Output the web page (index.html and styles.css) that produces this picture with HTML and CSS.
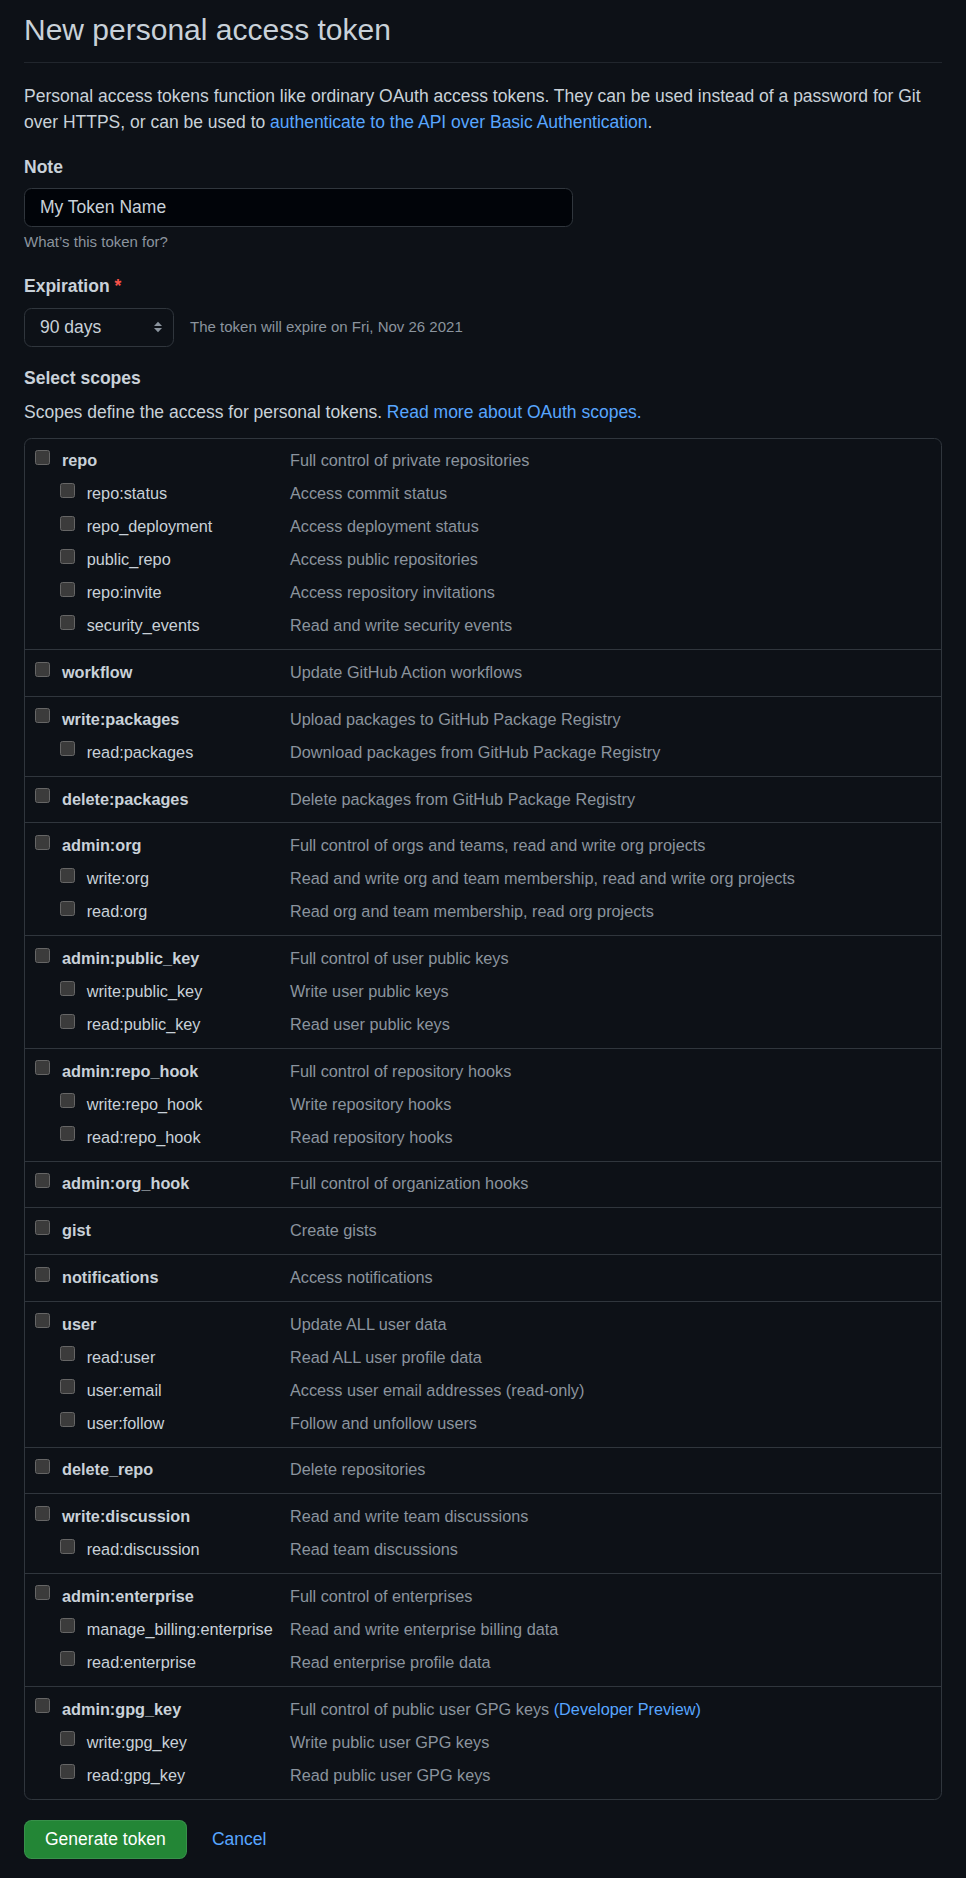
FILE: index.html
```html
<!DOCTYPE html>
<html lang="en">
<head>
<meta charset="utf-8">
<title>New personal access token</title>
<link rel="stylesheet" href="styles.css">
</head>
<body>
<main class="page">
  <div class="subhead">
    <h2 class="subhead-title">New personal access token</h2>
  </div>
  <p class="intro">Personal access tokens function like ordinary OAuth access tokens. They can be used instead of a password for Git over HTTPS, or can be used to <a href="#">authenticate to the API over Basic Authentication</a>.</p>

  <div class="field">
    <label class="field-label">Note</label>
    <input class="text-input" type="text" value="My Token Name">
    <p class="hint">What’s this token for?</p>
  </div>

  <div class="field expiration">
    <label class="field-label">Expiration <span class="req">*</span></label>
    <div class="expire-row">
      <div class="select">
        <span>90 days</span>
        <svg class="select-arrows" width="10" height="12" viewBox="0 0 10 12" aria-hidden="true">
          <path d="M1 5 L5 0.8 L9 5 Z" fill="#8b949e"/>
          <path d="M1 7 L5 11.2 L9 7 Z" fill="#8b949e"/>
        </svg>
      </div>
      <span class="expire-text">The token will expire on Fri, Nov 26 2021</span>
    </div>
  </div>

  <div class="field scopes-field">
    <h3 class="field-label">Select scopes</h3>
    <p class="scopes-intro">Scopes define the access for personal tokens. <a href="#">Read more about OAuth scopes.</a></p>

    <div class="scopes">
      <div class="scope-group">
        <div class="scope-row"><label class="scope-name"><input class="check" type="checkbox"><span class="scope-title">repo</span></label><span class="scope-desc">Full control of private repositories</span></div>
        <div class="scope-row sub"><label class="scope-name"><input class="check" type="checkbox"><span>repo:status</span></label><span class="scope-desc">Access commit status</span></div>
        <div class="scope-row sub"><label class="scope-name"><input class="check" type="checkbox"><span>repo_deployment</span></label><span class="scope-desc">Access deployment status</span></div>
        <div class="scope-row sub"><label class="scope-name"><input class="check" type="checkbox"><span>public_repo</span></label><span class="scope-desc">Access public repositories</span></div>
        <div class="scope-row sub"><label class="scope-name"><input class="check" type="checkbox"><span>repo:invite</span></label><span class="scope-desc">Access repository invitations</span></div>
        <div class="scope-row sub"><label class="scope-name"><input class="check" type="checkbox"><span>security_events</span></label><span class="scope-desc">Read and write security events</span></div>
      </div>
      <div class="scope-group">
        <div class="scope-row"><label class="scope-name"><input class="check" type="checkbox"><span class="scope-title">workflow</span></label><span class="scope-desc">Update GitHub Action workflows</span></div>
      </div>
      <div class="scope-group">
        <div class="scope-row"><label class="scope-name"><input class="check" type="checkbox"><span class="scope-title">write:packages</span></label><span class="scope-desc">Upload packages to GitHub Package Registry</span></div>
        <div class="scope-row sub"><label class="scope-name"><input class="check" type="checkbox"><span>read:packages</span></label><span class="scope-desc">Download packages from GitHub Package Registry</span></div>
      </div>
      <div class="scope-group">
        <div class="scope-row"><label class="scope-name"><input class="check" type="checkbox"><span class="scope-title">delete:packages</span></label><span class="scope-desc">Delete packages from GitHub Package Registry</span></div>
      </div>
      <div class="scope-group">
        <div class="scope-row"><label class="scope-name"><input class="check" type="checkbox"><span class="scope-title">admin:org</span></label><span class="scope-desc">Full control of orgs and teams, read and write org projects</span></div>
        <div class="scope-row sub"><label class="scope-name"><input class="check" type="checkbox"><span>write:org</span></label><span class="scope-desc">Read and write org and team membership, read and write org projects</span></div>
        <div class="scope-row sub"><label class="scope-name"><input class="check" type="checkbox"><span>read:org</span></label><span class="scope-desc">Read org and team membership, read org projects</span></div>
      </div>
      <div class="scope-group">
        <div class="scope-row"><label class="scope-name"><input class="check" type="checkbox"><span class="scope-title">admin:public_key</span></label><span class="scope-desc">Full control of user public keys</span></div>
        <div class="scope-row sub"><label class="scope-name"><input class="check" type="checkbox"><span>write:public_key</span></label><span class="scope-desc">Write user public keys</span></div>
        <div class="scope-row sub"><label class="scope-name"><input class="check" type="checkbox"><span>read:public_key</span></label><span class="scope-desc">Read user public keys</span></div>
      </div>
      <div class="scope-group">
        <div class="scope-row"><label class="scope-name"><input class="check" type="checkbox"><span class="scope-title">admin:repo_hook</span></label><span class="scope-desc">Full control of repository hooks</span></div>
        <div class="scope-row sub"><label class="scope-name"><input class="check" type="checkbox"><span>write:repo_hook</span></label><span class="scope-desc">Write repository hooks</span></div>
        <div class="scope-row sub"><label class="scope-name"><input class="check" type="checkbox"><span>read:repo_hook</span></label><span class="scope-desc">Read repository hooks</span></div>
      </div>
      <div class="scope-group">
        <div class="scope-row"><label class="scope-name"><input class="check" type="checkbox"><span class="scope-title">admin:org_hook</span></label><span class="scope-desc">Full control of organization hooks</span></div>
      </div>
      <div class="scope-group">
        <div class="scope-row"><label class="scope-name"><input class="check" type="checkbox"><span class="scope-title">gist</span></label><span class="scope-desc">Create gists</span></div>
      </div>
      <div class="scope-group">
        <div class="scope-row"><label class="scope-name"><input class="check" type="checkbox"><span class="scope-title">notifications</span></label><span class="scope-desc">Access notifications</span></div>
      </div>
      <div class="scope-group">
        <div class="scope-row"><label class="scope-name"><input class="check" type="checkbox"><span class="scope-title">user</span></label><span class="scope-desc">Update ALL user data</span></div>
        <div class="scope-row sub"><label class="scope-name"><input class="check" type="checkbox"><span>read:user</span></label><span class="scope-desc">Read ALL user profile data</span></div>
        <div class="scope-row sub"><label class="scope-name"><input class="check" type="checkbox"><span>user:email</span></label><span class="scope-desc">Access user email addresses (read-only)</span></div>
        <div class="scope-row sub"><label class="scope-name"><input class="check" type="checkbox"><span>user:follow</span></label><span class="scope-desc">Follow and unfollow users</span></div>
      </div>
      <div class="scope-group">
        <div class="scope-row"><label class="scope-name"><input class="check" type="checkbox"><span class="scope-title">delete_repo</span></label><span class="scope-desc">Delete repositories</span></div>
      </div>
      <div class="scope-group">
        <div class="scope-row"><label class="scope-name"><input class="check" type="checkbox"><span class="scope-title">write:discussion</span></label><span class="scope-desc">Read and write team discussions</span></div>
        <div class="scope-row sub"><label class="scope-name"><input class="check" type="checkbox"><span>read:discussion</span></label><span class="scope-desc">Read team discussions</span></div>
      </div>
      <div class="scope-group">
        <div class="scope-row"><label class="scope-name"><input class="check" type="checkbox"><span class="scope-title">admin:enterprise</span></label><span class="scope-desc">Full control of enterprises</span></div>
        <div class="scope-row sub"><label class="scope-name"><input class="check" type="checkbox"><span>manage_billing:enterprise</span></label><span class="scope-desc">Read and write enterprise billing data</span></div>
        <div class="scope-row sub"><label class="scope-name"><input class="check" type="checkbox"><span>read:enterprise</span></label><span class="scope-desc">Read enterprise profile data</span></div>
      </div>
      <div class="scope-group">
        <div class="scope-row"><label class="scope-name"><input class="check" type="checkbox"><span class="scope-title">admin:gpg_key</span></label><span class="scope-desc">Full control of public user GPG keys <a href="#">(Developer Preview)</a></span></div>
        <div class="scope-row sub"><label class="scope-name"><input class="check" type="checkbox"><span>write:gpg_key</span></label><span class="scope-desc">Write public user GPG keys</span></div>
        <div class="scope-row sub"><label class="scope-name"><input class="check" type="checkbox"><span>read:gpg_key</span></label><span class="scope-desc">Read public user GPG keys</span></div>
      </div>
    </div>
  </div>

  <div class="actions">
    <button class="btn-primary" type="button">Generate token</button>
    <a class="cancel" href="#">Cancel</a>
  </div>
</main>
</body>
</html>
```

FILE: styles.css
```css
* { box-sizing: border-box; }

html, body { margin: 0; padding: 0; }

body {
  background: #0d1117;
  color: #c9d1d9;
  font-family: "Liberation Sans", Arial, sans-serif;
  font-size: 17.5px;
  line-height: 26.25px;
}

a { color: #58a6ff; text-decoration: none; }

.page { padding: 7px 24px 0; }

.subhead {
  padding-bottom: 10px;
  border-bottom: 1px solid #21262d;
  margin-bottom: 20px;
}

.subhead-title {
  margin: 0;
  font-size: 30px;
  font-weight: 400;
  line-height: 45px;
}

.intro { margin: 0 0 18.8px; }

.field-label {
  display: block;
  margin: 0;
  font-size: 17.5px;
  font-weight: 700;
  line-height: 26.25px;
}

.req { color: #f85149; }

.text-input {
  display: block;
  margin-top: 7px;
  width: 549px;
  height: 39.5px;
  padding: 0 15px;
  background: #010409;
  border: 1px solid #30363d;
  border-radius: 7.5px;
  color: #c9d1d9;
  font: inherit;
  outline: none;
}

.hint {
  margin: 4px 0 0;
  font-size: 15px;
  line-height: 22.5px;
  color: #8b949e;
}

.expiration { margin-top: 19.75px; }

.expire-row {
  display: flex;
  align-items: center;
  margin-top: 8px;
}

.select {
  width: 150px;
  height: 39.5px;
  display: flex;
  align-items: center;
  justify-content: space-between;
  padding: 0 10.5px 0 15px;
  border: 1px solid #30363d;
  border-radius: 7.5px;
  background: #0d1117;
}

.select-arrows { display: block; }

.expire-text {
  margin-left: 16.1px;
  font-size: 15px;
  line-height: 22.5px;
  color: #8b949e;
}

.scopes-field { margin-top: 18px; }

.scopes-intro { margin: 8px 0 0; }

.scopes {
  margin-top: 12px;
  border: 1px solid #30363d;
  border-radius: 7.5px;
  font-size: 16.25px;
}

.scope-group {
  padding: 8.8px 0 3.95px;
  border-top: 1px solid #30363d;
}

.scope-group:first-child { border-top: 0; }

.scope-row {
  display: flex;
  padding: 0 0 6.75px 10.3px;
}

.scope-name {
  display: flex;
  align-items: flex-start;
  flex-shrink: 0;
  width: 254.7px;
}

.scope-row.sub .scope-name { padding-left: 24.7px; }

.check {
  -webkit-appearance: none;
  appearance: none;
  flex-shrink: 0;
  width: 15px;
  height: 15px;
  margin: 2.6px 11.7px 0 0;
  background: #3b3b3b;
  border: 1px solid #666666;
  border-radius: 2.5px;
}

.scope-title { font-weight: 700; }

.scope-desc { color: #8b949e; }

.actions {
  display: flex;
  align-items: center;
  margin-top: 20px;
}

.btn-primary {
  height: 39.4px;
  padding: 0 20px;
  background: #238636;
  border: 1px solid rgba(240, 246, 252, 0.1);
  border-radius: 7.5px;
  color: #ffffff;
  font: inherit;
  cursor: pointer;
}

.cancel { margin-left: 25.3px; }
```
